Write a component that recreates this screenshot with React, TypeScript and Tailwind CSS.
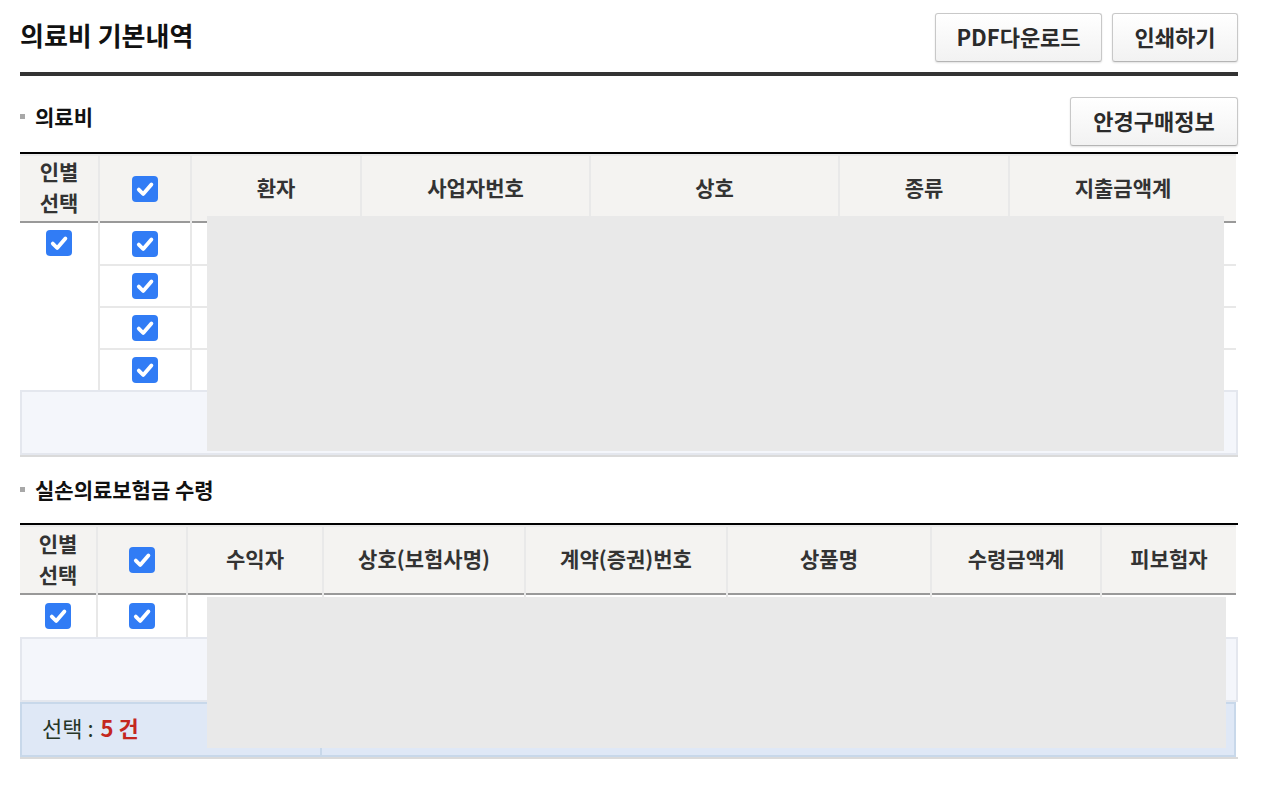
import React from 'react';

const FONT = "font-['Noto_Sans_CJK_KR','Noto_Sans',sans-serif]";

function CheckBox() {
  return (
    <div className="flex h-[26px] w-[26px] items-center justify-center rounded-[4px] bg-[#317cf5]">
      <svg width="26" height="26" viewBox="0 0 26 26">
        <polyline points="6.8,13.6 11.2,18 19.4,8.4" fill="none" stroke="#ffffff" strokeWidth="3.8" strokeLinecap="round" strokeLinejoin="round" />
      </svg>
    </div>
  );
}

function GrayButton({ label, width }: { label: string; width: string }) {
  return (
    <button
      className={`${width} flex h-[49px] items-center justify-center rounded-[3px] border border-[#c8c8c8] border-b-[#b5b5b5] bg-gradient-to-b from-white to-[#f2f2f2] pb-[2px] text-[22px] font-bold text-[#2b2b2b] shadow-[0_1px_2px_rgba(0,0,0,0.12)]`}
    >
      {label}
    </button>
  );
}

function SectionTitle({ text }: { text: string }) {
  return (
    <div className="flex items-center gap-[10px]">
      <span className="h-[5px] w-[5px] bg-[#a8a8a8]" />
      <span className="text-[21px] font-bold leading-[28px] text-[#111]">{text}</span>
    </div>
  );
}

function HeadCell({ children }: { children: React.ReactNode }) {
  return (
    <div className="flex h-full items-center justify-center border-b-2 border-[#999] bg-[#f4f3f1] pb-[3px] text-center text-[21px] font-bold leading-[31px] text-[#333]">
      {children}
    </div>
  );
}

function HeadCheckCell() {
  return (
    <div className="flex h-full items-center justify-center border-b-2 border-[#999] bg-[#f4f3f1]">
      <CheckBox />
    </div>
  );
}

function MedicalTable() {
  const heads = ['환자', '사업자번호', '상호', '종류', '지출금액계'];
  const cols = 'grid-cols-[78px_90px_168px_227px_247px_168px_226px]';
  return (
    <div className="relative">
      <div className="border-t-2 border-black">
        <div className={`grid ${cols} h-[69px] w-[1216px] gap-x-[2px] bg-[#e9e9e9] pt-[2px]`}>
          <HeadCell>
            인별
            <br />
            선택
          </HeadCell>
          <HeadCheckCell />
          {heads.map((h) => (
            <HeadCell key={h}>{h}</HeadCell>
          ))}
        </div>
        <div className={`grid ${cols} grid-rows-[41px_40px_40px_40px] w-[1216px] gap-[2px] bg-[#e8e8e8]`}>
          <div className="row-span-4 flex justify-center bg-white pt-[7px]">
            <CheckBox />
          </div>
          {[0, 1, 2, 3].map((r) => (
            <React.Fragment key={r}>
              <div className="flex items-center justify-center bg-white">
                <CheckBox />
              </div>
              {heads.map((h) => (
                <div key={h} className="bg-white" />
              ))}
            </React.Fragment>
          ))}
        </div>
        <div className="h-[65px] border-2 border-[#e4e7ee] bg-[#f4f6fb]" />
        <div className="h-[2px] bg-[#dadada]" />
      </div>
      <div className="absolute left-[187px] top-[64px] h-[235px] w-[1017px] bg-[#e9e9e9]" />
    </div>
  );
}

function InsuranceTable() {
  const heads = ['수익자', '상호(보험사명)', '계약(증권)번호', '상품명', '수령금액계', '피보험자'];
  const cols = 'grid-cols-[76px_88px_134px_200px_200px_202px_168px_134px]';
  return (
    <div className="relative">
      <div className="border-t-2 border-black">
        <div className={`grid ${cols} h-[70px] w-[1216px] gap-x-[2px] bg-[#e9e9e9] pt-[2px]`}>
          <HeadCell>
            인별
            <br />
            선택
          </HeadCell>
          <HeadCheckCell />
          {heads.map((h) => (
            <HeadCell key={h}>{h}</HeadCell>
          ))}
        </div>
        <div className={`grid ${cols} h-[42px] w-[1216px] gap-x-[2px] bg-[#e8e8e8]`}>
          <div className="flex items-center justify-center bg-white">
            <CheckBox />
          </div>
          <div className="flex items-center justify-center bg-white">
            <CheckBox />
          </div>
          {heads.map((h) => (
            <div key={h} className="bg-white" />
          ))}
        </div>
        <div className="h-[65px] border-2 border-[#e4e7ee] bg-[#f4f6fb]" />
        <div className="flex h-[55px] w-[1216px] border-2 border-[#c8d8ea] bg-[#dfe8f6]">
          <div className="flex w-[300px] items-center border-r-2 border-[#c8d8ea] pb-[4px] pl-[20px] text-[22px]">
            <span className="text-[#263626]">선택 :</span>
            <span className="ml-[7px] font-bold text-[#c4271f]">5 건</span>
          </div>
        </div>
        <div className="h-[2px] bg-[#dadada]" />
      </div>
      <div className="absolute left-[187px] top-[74px] h-[151px] w-[1019px] bg-[#e9e9e9]" />
    </div>
  );
}

export default function App() {
  return (
    <div className={`min-h-[798px] w-[1264px] bg-white ${FONT}`}>
      <div className="ml-[20px] w-[1218px]">
        <div className="flex items-center justify-between pt-[13px]">
          <h1 className="pb-[5px] text-[26px] font-bold leading-[34px] text-[#111]">의료비 기본내역</h1>
          <div className="flex gap-[10px]">
            <GrayButton label="PDF다운로드" width="w-[167px]" />
            <GrayButton label="인쇄하기" width="w-[126px]" />
          </div>
        </div>
        <div className="mt-[10px] h-[4px] bg-[#333]" />

        <div className="mb-[6px] mt-[21px] flex items-start justify-between">
          <div className="mt-[5px]">
            <SectionTitle text="의료비" />
          </div>
          <GrayButton label="안경구매정보" width="w-[168px]" />
        </div>
        <MedicalTable />

        <div className="mb-[20px] mt-[18px]">
          <SectionTitle text="실손의료보험금 수령" />
        </div>
        <InsuranceTable />
      </div>
    </div>
  );
}
